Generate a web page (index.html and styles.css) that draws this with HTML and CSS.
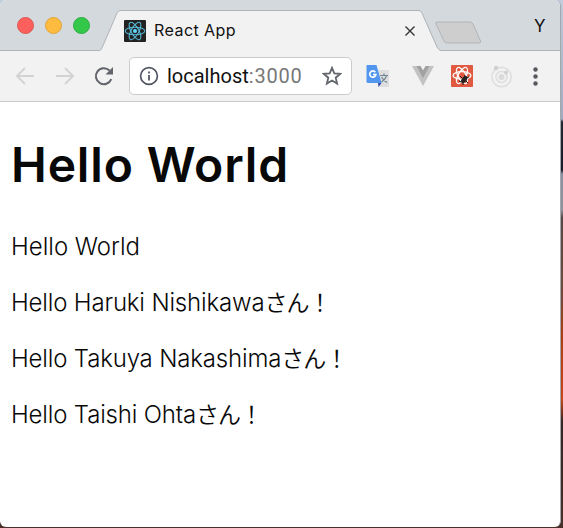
FILE: index.html
```html
<!DOCTYPE html>
<html lang="ja">
<head>
<meta charset="utf-8">
<title>React App</title>
<link rel="stylesheet" href="styles.css">
</head>
<body>
<div class="window">
  <header class="tabstrip">
    <svg class="tab-shape" width="561" height="51" viewBox="0 0 561 51" aria-hidden="true">
      <path d="M0 50.5H99Q101 50.5 102 48L117 13Q118 11 120 10.500H419Q421 11 422 13L437 47Q439 50.500 441 50.500H561V52H0Z" fill="#f2f2f2" stroke="#afb3b7"/>
      <path d="M437 22H470Q472 22 473 24L480.500 41Q481 43 479 43H447Q445 43 444 41L436 24Q435 22 437 22Z" fill="#cecece" stroke="#b2b4b7"/>
    </svg>
    <div class="lights"><i class="light red"></i><i class="light yellow"></i><i class="light green"></i></div>
    <svg class="favicon" width="22" height="22" viewBox="0 0 22 22">
      <rect width="22" height="22" rx="1" fill="#222"/>
      <g fill="none" stroke="#55b9d6" stroke-width="1.100"><ellipse cx="11" cy="11" rx="9.800" ry="3.800"/><ellipse cx="11" cy="11" rx="9.800" ry="3.800" transform="rotate(60 11 11)"/><ellipse cx="11" cy="11" rx="9.800" ry="3.800" transform="rotate(120 11 11)"/></g>
      <circle cx="11" cy="11" r="2" fill="#61dafb"/>
    </svg>
    <span class="tab-title">React App</span>
    <svg class="close" width="12" height="12" viewBox="0 0 12 12"><path d="M1.500 1.500l9 9M10.500 1.500l-9 9" stroke="#333" stroke-width="1.400"/></svg>
    <span class="profile">Y</span>
  </header>
  <nav class="toolbar">
    <svg class="back" width="20" height="20" viewBox="0 0 20 20"><path d="M19 10H2M10 2L2 10l8 8" fill="none" stroke="#d3d3d3" stroke-width="1.900"/></svg>
    <svg class="forward" width="20" height="20" viewBox="0 0 20 20"><path d="M1 10h17M10 2l8 8-8 8" fill="none" stroke="#d3d3d3" stroke-width="1.900"/></svg>
    <svg class="reload" width="22" height="22" viewBox="0 0 22 22"><path d="M18.300 14.200A8 8 0 1 1 16.500 5.500" fill="none" stroke="#62656b" stroke-width="2"/><path d="M20 2v7.500h-7.500z" fill="#62656b"/></svg>
    <div class="address">
      <svg class="info" width="20" height="20" viewBox="0 0 20 20"><circle cx="10" cy="10" r="8.400" fill="none" stroke="#535864" stroke-width="1.700"/><path d="M10 9v5.500M10 5.500v2" stroke="#535864" stroke-width="1.800"/></svg>
      <span class="url">localhost<span class="port">:3000</span></span>
      <svg class="star" width="20" height="20" viewBox="0 0 20 20"><path d="M10 1.800l2.300 5.500 6 .5-4.600 3.900 1.400 5.900L10 14.500l-5.100 3.100 1.400-5.900-4.600-3.900 6-.5z" fill="none" stroke="#63666c" stroke-width="1.800"/></svg>
    </div>
    <svg class="translate" width="23" height="23" viewBox="0 0 23 23">
      <path d="M10 5h12q1 0 1 1v15q0 1-1 1h-9z" fill="#dedede"/>
      <path d="M14 10.500h8M18 8.500v2M20.500 11q-1.500 4-5 6M15.500 12q2 3.500 5.500 5.500" fill="none" stroke="#70858f" stroke-width="1.200"/>
      <path d="M1 0h9.500l5 18H2q-1.500 0-1.500-1.500V1Q.5 0 1 0Z" fill="#5296ef"/><path d="M12 18h3.500L12.500 22z" fill="#3549b0"/>
      <path d="M9.300 7.200A3.100 3.100 0 1 0 9.900 9.500H7" fill="none" stroke="#fff" stroke-width="1.700"/>
    </svg>
    <svg class="vue" width="22" height="20" viewBox="0 0 22 20"><path d="M0 0h22L11 20z" fill="#c2c2c2"/><path d="M4.500 0h13L11 12z" fill="#a1a1a1"/><path d="M8.500 0h5L11 4.500z" fill="#f2f2f2"/></svg>
    <svg class="devtools" width="22" height="22" viewBox="0 0 22 22">
      <rect width="22" height="22" rx="1" fill="#e15940"/>
      <g fill="none" stroke="#fff" stroke-width="1.300"><ellipse cx="11" cy="10.500" rx="9" ry="3.800"/><ellipse cx="11" cy="10.500" rx="9" ry="3.800" transform="rotate(60 11 10.500)"/><ellipse cx="11" cy="10.500" rx="9" ry="3.800" transform="rotate(120 11 10.500)"/></g>
      <ellipse cx="13.300" cy="14.500" rx="2.300" ry="4.200" transform="rotate(38 13.300 14.500)" fill="#272323"/><path d="M9 11l3 3M10 17l-2-1M12 18v2M14 10l-1 3M15 13l3-1M15 16l2 2" stroke="#272323" stroke-width="1"/>
    </svg>
    <svg class="orbit" width="22" height="23" viewBox="0 0 22 23"><g fill="none" stroke="#dedede" stroke-width="1.500"><circle cx="11.500" cy="12" r="9.700"/><circle cx="11.500" cy="12" r="5.500"/></g><circle cx="11.500" cy="12" r="3" fill="#dadada"/><circle cx="6" cy="3" r="2.200" fill="#d0d0d0"/><circle cx="16" cy="7.500" r="2" fill="#d0d0d0"/></svg>
    <svg class="menu" width="5" height="19" viewBox="0 0 5 19"><g fill="#56595f"><circle cx="2.500" cy="2.500" r="2.200"/><circle cx="2.500" cy="9.500" r="2.200"/><circle cx="2.500" cy="16.500" r="2.200"/></g></svg>
  </nav>
  <main class="page">
    <h1>Hello World</h1>
    <p>Hello World</p>
    <p><span class="name">Hello Haruki Nishikawa</span><span class="jp">さん！</span></p>
    <p><span class="name">Hello Takuya Nakashima</span><span class="jp">さん！</span></p>
    <p><span class="name">Hello Taishi Ohta</span><span class="jp">さん！</span></p>
  </main>
</div>
</body>
</html>
```

FILE: styles.css
```css
* { box-sizing: border-box; }
body {
  margin: 0;
  height: 528px;
  overflow: hidden;
  background: linear-gradient(#bdcbdc 0, #9eabc1 119px, #242733 122px, #171b2b 170px, #8992a4 174px, #8f929c 210px, #584845 218px, #744b36 300px, #ad3d15 335px, #c3471a 400px, #342725 422px, #4a3029 528px);
}
svg { display: block; flex: none; }
.window { width: 561px; height: 527px; border-radius: 6px; overflow: hidden; background: #fff; border-right: 1px solid #a5a7ac; }
.tabstrip { position: relative; display: flex; height: 51px; background: #d4d9de; font-family: Inter, sans-serif; }
.tab-shape { position: absolute; left: 0; top: 0; }
.lights { position: relative; display: flex; gap: 11px; margin: 17px 0 0 17px; width: 106px; }
.light { width: 17px; height: 17px; border-radius: 50%; border: 1px solid; }
.red { background: #fc605c; border-color: #df5651; }
.yellow { background: #fdbc40; border-color: #dfa43b; }
.green { background: #34c84a; border-color: #2dad3f; }
.favicon { position: relative; margin: 20px 0 0 1px; }
.tab-title { position: relative; margin: 19px 0 0 8px; width: 250px; font-size: 16px; line-height: 22px; letter-spacing: .45px; color: #111; white-space: nowrap; }
.close { position: relative; margin-top: 25px; }
.profile { position: relative; margin: 15px 0 0 118px; font-size: 17px; line-height: 22px; color: #111; }
.toolbar { display: flex; align-items: center; height: 51px; padding-left: 15px; background: #f2f2f2; border-bottom: 1px solid #c9c9c9; }
.forward { margin-left: 20px; }
.reload { margin-left: 18px; }
.address { display: flex; align-items: center; width: 223px; height: 38px; margin-left: 14px; padding-left: 9px; border: 1px solid #cbcbcb; border-radius: 5px; background: #fff; }
.url { width: 145px; margin-left: 8px; font: 20px/24px Roboto, sans-serif; color: #111; white-space: nowrap; }
.port { color: #777; letter-spacing: .8px; }
.star { margin-left: 10px; }
.translate { margin-left: 14px; }
.vue { margin-left: 23px; }
.devtools { margin-left: 17px; }
.orbit { margin-left: 17px; }
.menu { margin-left: 21px; }
.page { padding: 39px 0 0 11px; font-family: Inter, "Noto Sans CJK JP", sans-serif; color: #080808; }
h1 { margin: 0 0 44px; font-size: 48px; line-height: 48px; font-weight: 600; letter-spacing: .85px; white-space: nowrap; }
p { margin: 0 0 28px; height: 28px; font-size: 24px; line-height: 28px; font-weight: 300; white-space: nowrap; }
.name { letter-spacing: -.17px; }
.jp { font-family: "Noto Sans CJK JP", sans-serif; font-size: 23px; line-height: 0; font-weight: 350; letter-spacing: -1px; }
```
